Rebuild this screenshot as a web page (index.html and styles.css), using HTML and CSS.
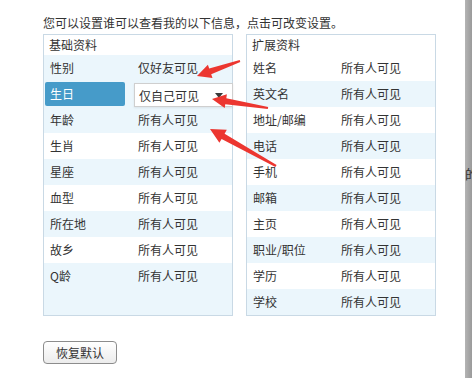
FILE: index.html
```html
<!DOCTYPE html>
<html lang="zh-CN">
<head>
  <meta charset="UTF-8" />
  <title>资料权限设置</title>
  <link rel="stylesheet" href="styles.css">
</head>
<body>
  <div class="page">
    <p class="intro">您可以设置谁可以查看我的以下信息，点击可改变设置。</p>

    <div class="panels">
      <div class="panel">
        <div class="panel-head">基础资料</div>
        <div class="row"><span class="key">性别</span><span class="val">仅好友可见</span></div>
        <div class="row selected">
          <span class="key">生日</span>
          <div class="select">仅自己可见<i class="caret"></i></div>
        </div>
        <div class="row"><span class="key">年龄</span><span class="val">所有人可见</span></div>
        <div class="row white"><span class="key">生肖</span><span class="val">所有人可见</span></div>
        <div class="row"><span class="key">星座</span><span class="val">所有人可见</span></div>
        <div class="row white"><span class="key">血型</span><span class="val">所有人可见</span></div>
        <div class="row"><span class="key">所在地</span><span class="val">所有人可见</span></div>
        <div class="row white"><span class="key">故乡</span><span class="val">所有人可见</span></div>
        <div class="row"><span class="key">Q龄</span><span class="val">所有人可见</span></div>
        <div class="row"></div>
      </div>

      <div class="panel">
        <div class="panel-head">扩展资料</div>
        <div class="row white"><span class="key">姓名</span><span class="val">所有人可见</span></div>
        <div class="row"><span class="key">英文名</span><span class="val">所有人可见</span></div>
        <div class="row white"><span class="key">地址/邮编</span><span class="val">所有人可见</span></div>
        <div class="row"><span class="key">电话</span><span class="val">所有人可见</span></div>
        <div class="row white"><span class="key">手机</span><span class="val">所有人可见</span></div>
        <div class="row"><span class="key">邮箱</span><span class="val">所有人可见</span></div>
        <div class="row white"><span class="key">主页</span><span class="val">所有人可见</span></div>
        <div class="row"><span class="key">职业/职位</span><span class="val">所有人可见</span></div>
        <div class="row white"><span class="key">学历</span><span class="val">所有人可见</span></div>
        <div class="row"><span class="key">学校</span><span class="val">所有人可见</span></div>
      </div>
    </div>

    <button class="btn">恢复默认</button>
  </div>

  <!-- annotation arrows drawn over the screenshot -->
  <svg class="arrows" width="472" height="378" viewBox="0 0 472 378">
    <polygon points="239.7,60.1 209.2,68.6 207.9,64.8 197,76 212.5,78 211.2,74.2 240.3,62" />
    <polygon points="268.2,107 226.3,98.2 226.9,94.3 212,99 224.7,108.1 225.3,104.2 267.8,109" />
    <polygon points="276.6,165 224.6,133.7 226.8,129.8 210,129 219.4,142.8 221.6,138.9 275.4,167" />
  </svg>

  <div class="edge"><span>的</span></div>
</body>
</html>
```

FILE: styles.css
```css
body {
  margin: 0;
  background: #fff;
  font-family: "Noto Sans CJK SC", "Noto Sans", sans-serif;
  font-size: 12px;
  color: #333;
}
.page {
  padding: 14px 0 0 43px;
}
.intro {
  margin: 0;
  line-height: 18px;
  color: #333;
}
.panels {
  display: flex;
  gap: 13px;
  margin-top: 2px;
}
.panel {
  width: 190px;
  box-sizing: border-box;
  border: 1px solid #c9d9e5;
  background: #ebf6fc;
}
.panel-head {
  height: 20px;
  line-height: 20px;
  padding-left: 5px;
  background: #fff;
}
.row {
  display: flex;
  height: 26px;
  line-height: 26px;
}
.row.white {
  background: #fff;
}
.key {
  width: 94px;
  box-sizing: border-box;
  padding-left: 6px;
  flex-shrink: 0;
}
.selected .key {
  width: 80px;
  height: 24px;
  line-height: 24px;
  margin: 1px 0 1px 1px;
  padding-left: 5px;
  background: #469bc9;
  color: #fff;
  border-radius: 2px;
}
.select {
  position: relative;
  flex-shrink: 0;
  width: 99px;
  height: 24px;
  line-height: 23px;
  margin: 2px 0 0 9px;
  padding-left: 4px;
  box-sizing: border-box;
  background: #fff;
  border: 1px solid #cfcfcf;
  box-shadow: 0 1px 2px rgba(0,0,0,0.08);
}
.caret {
  position: absolute;
  right: 9px;
  top: 9px;
  width: 0;
  height: 0;
  border-left: 4px solid transparent;
  border-right: 4px solid transparent;
  border-top: 5px solid #3a3a3a;
}
.btn {
  display: block;
  margin-top: 25px;
  width: 74px;
  height: 23px;
  padding: 0;
  font-family: inherit;
  font-size: 12px;
  color: #333;
  border: 1px solid #8c8c8c;
  border-radius: 4px;
  background: linear-gradient(#ffffff, #ececec);
}
.arrows {
  position: absolute;
  left: 0;
  top: 0;
  pointer-events: none;
}
.arrows polygon {
  fill: #ec3630;
}
.edge {
  position: absolute;
  top: 0;
  right: 0;
  width: 7px;
  height: 378px;
  overflow: hidden;
  background: linear-gradient(90deg, #b4b4b4, #9a9a9a);
}
.edge span {
  position: absolute;
  top: 164px;
  left: 0;
  font-size: 13px;
  color: #333;
}
```
